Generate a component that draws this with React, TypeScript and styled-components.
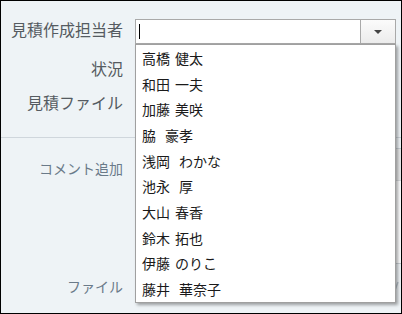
import React from "react";
import styled, { createGlobalStyle } from "styled-components";

const Global = createGlobalStyle`
  html, body { margin: 0; padding: 0; background: #ffffff; }
  * { box-sizing: border-box; }
`;

const Frame = styled.div`
  position: relative;
  width: 402px;
  height: 314px;
  border: 1px solid #000;
  background: #eef3f6;
  overflow: hidden;
  font-family: "Noto Sans CJK JP", "Noto Sans", sans-serif;
`;

const Section = styled.div<{ $top: number; $bottom: number; $divider?: boolean }>`
  padding-top: ${(p) => p.$top}px;
  padding-bottom: ${(p) => p.$bottom}px;
  border-bottom: ${(p) => (p.$divider ? "1px solid #cfd6dc" : "none")};
`;

const Row = styled.div<{ $height: number; $after?: number }>`
  display: grid;
  grid-template-columns: 123px 1fr;
  column-gap: 11px;
  height: ${(p) => p.$height}px;
  margin-bottom: ${(p) => p.$after ?? 0}px;
`;

const Label = styled.div<{ $size: number; $muted?: boolean; $pad?: number }>`
  text-align: right;
  padding-right: 1px;
  padding-top: ${(p) => p.$pad ?? 0}px;
  font-size: ${(p) => p.$size}px;
  line-height: 20px;
  color: ${(p) => (p.$muted ? "#6a7a89" : "#555b61")};
  white-space: nowrap;
`;

const Combo = styled.div`
  display: flex;
  width: 261px;
  height: 25px;
  border: 1px solid #a9a9a9;
  background: #fff;
`;

const ComboInput = styled.div`
  flex: 1;
  display: flex;
  align-items: center;
  padding-left: 3px;
`;

const Caret = styled.span`
  display: block;
  width: 1px;
  height: 15px;
  background: #000;
`;

const ComboButton = styled.div`
  width: 35px;
  border-left: 1px solid #a9a9a9;
  background: linear-gradient(#fbfbfb, #ececec);
  display: flex;
  align-items: center;
  justify-content: center;
`;

const Editor = styled.div`
  width: 300px;
  height: 116px;
  border: 1px solid #c9d0d5;
  background: #fbfcfd;
  display: flex;
  flex-direction: column;
`;

const EditorToolbar = styled.div`
  height: 32px;
  background: #e7e8e9;
  border-bottom: 1px solid #d6d9dc;
`;

const FileField = styled.div`
  width: 300px;
  height: 24px;
  display: flex;
  justify-content: flex-end;
  align-items: center;
  padding-right: 36px;
`;

const Menu = styled.ul`
  position: absolute;
  top: 43px;
  left: 134px;
  width: 261px;
  height: 259px;
  margin: 0;
  padding: 0;
  list-style: none;
  background: #fff;
  border: 1px solid #a0a0a0;
  box-shadow: 2px 2px 3px rgba(0, 0, 0, 0.35);
`;

const MenuItem = styled.li`
  height: 25.7px;
  display: flex;
  align-items: center;
  padding-left: 6px;
  font-size: 14px;
  color: #1a1a1a;
  white-space: nowrap;
`;

const Given = styled.span<{ $wide: boolean }>`
  margin-left: ${(p) => (p.$wide ? 9 : 5)}px;
`;

const people: [string, string, boolean][] = [
  ["高橋", "健太", false],
  ["和田", "一夫", false],
  ["加藤", "美咲", false],
  ["脇", "豪孝", true],
  ["浅岡", "わかな", true],
  ["池永", "厚", true],
  ["大山", "春香", false],
  ["鈴木", "拓也", false],
  ["伊藤", "のりこ", false],
  ["藤井", "華奈子", true],
];

export default function App() {
  return (
    <>
      <Global />
      <Frame>
        <Section $top={18} $bottom={11} $divider>
          <Row $height={39}>
            <Label $size={16}>見積作成担当者</Label>
            <Combo>
              <ComboInput>
                <Caret />
              </ComboInput>
              <ComboButton>
                <svg width="8" height="4" viewBox="0 0 8 4">
                  <path d="M0 0H8L4 4Z" fill="#444" />
                </svg>
              </ComboButton>
            </Combo>
          </Row>
          <Row $height={34}>
            <Label $size={16}>状況</Label>
            <div />
          </Row>
          <Row $height={34}>
            <Label $size={16}>見積ファイル</Label>
            <div />
          </Row>
        </Section>
        <Section $top={10} $bottom={0}>
          <Row $height={116} $after={12}>
            <Label $size={14} $muted $pad={10}>コメント追加</Label>
            <Editor>
              <EditorToolbar />
            </Editor>
          </Row>
          <Row $height={24}>
            <Label $size={14} $muted>ファイル</Label>
            <FileField>
              <svg width="6" height="14" viewBox="0 0 6 14">
                <path d="M5 1 L1 12" stroke="#b9c3cb" strokeWidth="1.5" fill="none" />
              </svg>
            </FileField>
          </Row>
        </Section>
        <Menu>
          {people.map(([family, given, wide]) => (
            <MenuItem key={family + given}>
              <span>{family}</span>
              <Given $wide={wide}>{given}</Given>
            </MenuItem>
          ))}
        </Menu>
      </Frame>
    </>
  );
}
